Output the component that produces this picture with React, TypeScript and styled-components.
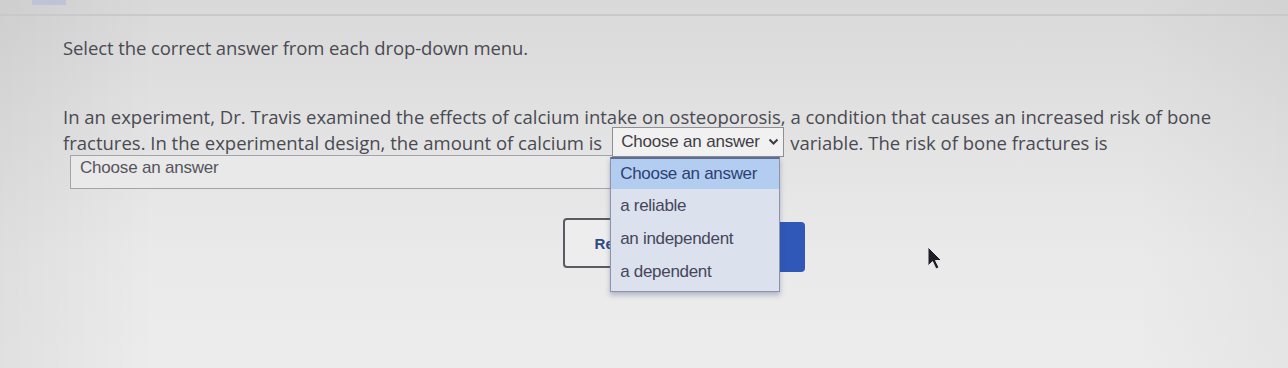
import React from 'react'
import styled, { createGlobalStyle } from 'styled-components'

const GlobalStyle = createGlobalStyle`
  html, body {
    margin: 0;
    padding: 0;
  }
  body {
    width: 1288px;
    height: 368px;
    overflow: hidden;
    font-family: 'Open Sans', 'Noto Sans', sans-serif;
  }
`

const Page = styled.div`
  position: relative;
  width: 1288px;
  height: 368px;
  overflow: hidden;
  background:
    linear-gradient(90deg, rgba(0, 0, 0, 0.05) 0%, rgba(0, 0, 0, 0) 12%, rgba(0, 0, 0, 0) 88%, rgba(0, 0, 0, 0.03) 100%),
    linear-gradient(180deg, #d9d9d9 0%, #e1e1e1 30%, #eaeaea 70%, #ececec 100%);
`

const TopBar = styled.div`
  height: 14px;
  border-bottom: 2px solid #c9c9cb;
  display: flex;
  padding-left: 32px;
`

const Tab = styled.div`
  width: 34px;
  height: 5px;
  background: #bfc3d8;
`

const Content = styled.div`
  padding: 19px 0 0 63px;
`

const Instructions = styled.p`
  margin: 0;
  font-size: 18.5px;
  line-height: 26px;
  color: #4a4a52;
  letter-spacing: -0.1px;
`

const Question = styled.div`
  margin-top: 43px;
  width: 1170px;
  font-size: 18.5px;
  line-height: 26px;
  color: #4a4a52;
  letter-spacing: 0;
`

const SelectWrap = styled.span`
  position: relative;
  display: inline-block;
  vertical-align: middle;
  margin: -6px 6px 0 10px;
`

const InlineSelect = styled.span`
  display: flex;
  align-items: center;
  justify-content: space-between;
  box-sizing: border-box;
  width: 172px;
  height: 30px;
  padding: 0 4px 0 8px;
  border: 1px solid #8d8f95;
  background: #f1f1f1;
  font-family: 'Liberation Sans', Arial, sans-serif;
  font-size: 17px;
  letter-spacing: -0.2px;
  color: #3e3e44;
`

const WideSelect = styled.div`
  box-sizing: border-box;
  width: 546px;
  height: 34px;
  margin: -2px 0 0 7px;
  padding: 2px 9px;
  border: 1px solid #a3a4a8;
  background: #e9e9e9;
  font-family: 'Liberation Sans', Arial, sans-serif;
  font-size: 17px;
  letter-spacing: -0.2px;
  line-height: 20px;
  color: #55555d;
`

const List = styled.div`
  position: absolute;
  left: -2px;
  top: 30px;
  width: 170px;
  box-sizing: border-box;
  border: 1px solid #8d93a8;
  border-top: 2px solid #5f6b92;
  background: #dce1ee;
  box-shadow: 0 3px 5px rgba(60, 70, 120, 0.35);
  z-index: 5;
  font-family: 'Liberation Sans', Arial, sans-serif;
  font-size: 17px;
  letter-spacing: -0.3px;
  line-height: 20px;
  padding-bottom: 3px;
`

const Option = styled.div<{ $active?: boolean }>`
  height: 33px;
  display: flex;
  align-items: center;
  padding: 0 9px;
  color: ${(p) => (p.$active ? '#2c3f73' : '#45465a')};
  background: ${(p) => (p.$active ? '#b3cdf0' : 'transparent')};
  &:first-child {
    height: 30px;
  }
`

const Buttons = styled.div`
  display: flex;
  gap: 12px;
  margin: 29px 0 0 500px;
`

const ResetButton = styled.div`
  box-sizing: border-box;
  width: 104px;
  height: 50px;
  display: flex;
  align-items: center;
  justify-content: center;
  border: 2px solid #5a5a60;
  border-radius: 4px;
  background: #ededed;
  font-family: 'Liberation Sans', Arial, sans-serif;
  font-weight: bold;
  font-size: 15px;
  color: #2d4a86;
`

const NextButton = styled.div`
  box-sizing: border-box;
  width: 126px;
  height: 50px;
  margin-top: 4px;
  border-radius: 4px;
  background: #2f58b8;
  display: flex;
  align-items: center;
  justify-content: center;
  font-family: 'Liberation Sans', Arial, sans-serif;
  font-weight: bold;
  font-size: 15px;
  color: #ffffff;
`

const Cursor = styled.svg`
  position: absolute;
  left: 926px;
  top: 246px;
`

const Chevron = () => (
  <svg width="11" height="8" viewBox="0 0 11 8">
    <path d="M1.5 1.5 L5.5 5.5 L9.5 1.5" fill="none" stroke="#3b3b44" strokeWidth="2" />
  </svg>
)

export default function App() {
  return (
    <>
      <GlobalStyle />
      <Page>
        <TopBar>
          <Tab />
        </TopBar>
        <Content>
          <Instructions>Select the correct answer from each drop-down menu.</Instructions>
          <Question>
            In an experiment, Dr. Travis examined the effects of calcium intake on osteoporosis, a condition
            that causes an increased risk of bone fractures. In the experimental design, the amount of calcium is
            <SelectWrap>
              <InlineSelect>
                Choose an answer
                <Chevron />
              </InlineSelect>
              <List>
                <Option $active>Choose an answer</Option>
                <Option>a reliable</Option>
                <Option>an independent</Option>
                <Option>a dependent</Option>
              </List>
            </SelectWrap>
            variable. The risk of bone fractures is
          </Question>
          <WideSelect>Choose an answer</WideSelect>
          <Buttons>
            <ResetButton>Reset</ResetButton>
            <NextButton>Next</NextButton>
          </Buttons>
        </Content>
        <Cursor width="18" height="26" viewBox="0 0 18 26">
          <path d="M2 1 L2 20 L6.5 15.5 L10 23 L13 21.5 L9.5 14.5 L15.5 14.5 Z" fill="#1e1e26" stroke="#e8e8e8" strokeWidth="1" />
        </Cursor>
      </Page>
    </>
  )
}
